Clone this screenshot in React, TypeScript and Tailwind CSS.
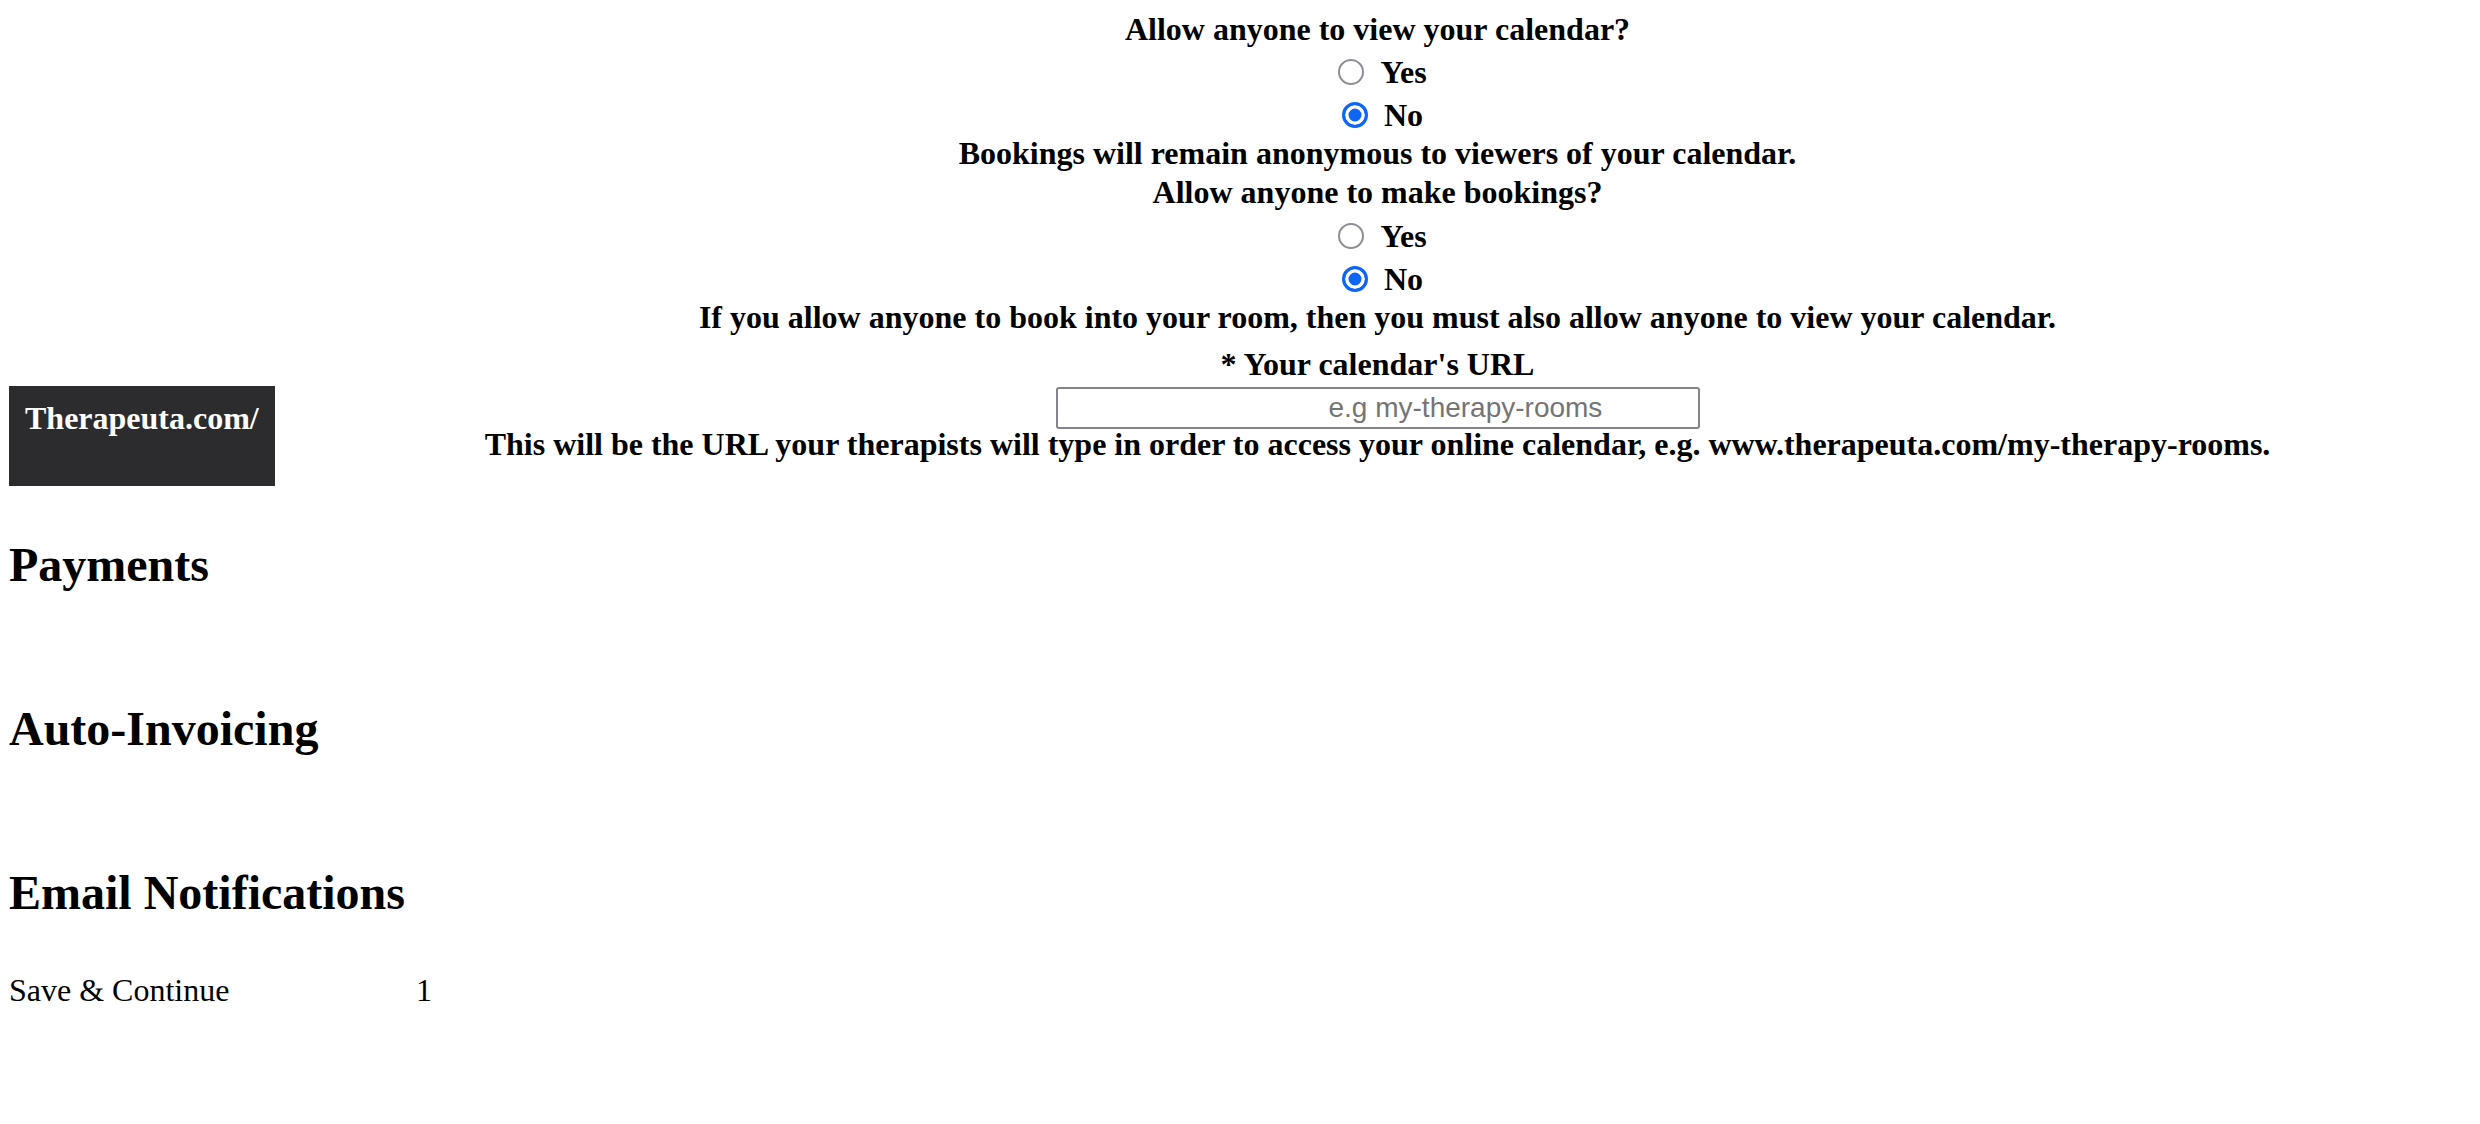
const RadioRow = ({ name, label, checked }: { name: string; label: string; checked?: boolean }) => {
  return (
    <label className="flex h-[43px] items-end justify-center">
      <input
        type="radio"
        name={name}
        defaultChecked={checked}
        className="m-0 mb-[6px] ml-[10px] mr-[16px] h-[26px] w-[26px] shrink-0 appearance-none rounded-full border-2 border-[#8f8e94] bg-white checked:border-[3px] checked:border-[#0d66f6] checked:bg-[#0d66f6] checked:shadow-[inset_0_0_0_3.5px_#fff]"
      />
      <span className="leading-[38px]">{label}</span>
    </label>
  );
};

const App = () => {
  return (
    <div className="min-h-[1124px] bg-white pl-[9px] font-['Liberation_Serif',serif] text-[32px] text-black">
      <div className="flex items-end">
        <div className="h-[100px] w-[266px] shrink-0 bg-[#2c2c2e] pl-4 pt-[13px] font-bold leading-[38px] text-white">
          Therapeuta.com/
        </div>
        <div className="flex flex-1 flex-col items-center pb-[27px] pt-[10px] text-center font-bold">
          <p className="leading-[38px]">Allow anyone to view your calendar?</p>
          <RadioRow name="view" label="Yes" />
          <RadioRow name="view" label="No" checked />
          <p className="leading-[38px]">Bookings will remain anonymous to viewers of your calendar.</p>
          <p className="leading-[40px]">Allow anyone to make bookings?</p>
          <RadioRow name="book" label="Yes" />
          <RadioRow name="book" label="No" checked />
          <p className="leading-[38px]">
            If you allow anyone to book into your room, then you must also allow anyone to view your calendar.
          </p>
          <p className="mt-[9px] leading-[38px]">* Your calendar's URL</p>
          <input
            type="text"
            placeholder="e.g my-therapy-rooms"
            className="mt-1 h-[42px] w-[644px] rounded-[3px] border-2 border-[#85848c] bg-white pl-[271px] text-left font-['Liberation_Sans',sans-serif] text-[28px] font-normal outline-none placeholder:text-[#757575]"
          />
          <p className="leading-[30px]">
            This will be the URL your therapists will type in order to access your online calendar, e.g.
            www.therapeuta.com/my-therapy-rooms.
          </p>
        </div>
      </div>

      <div className="mt-[51px] h-[164px]">
        <h2 className="text-[48px] font-bold leading-[56px]">Payments</h2>
      </div>
      <div className="h-[164px]">
        <h2 className="text-[48px] font-bold leading-[56px]">Auto-Invoicing</h2>
      </div>
      <div className="h-[106px]">
        <h2 className="text-[48px] font-bold leading-[56px]">Email Notifications</h2>
      </div>

      <div className="flex leading-[38px]">
        <span className="w-[407px]">Save &amp; Continue</span>
        <span>1</span>
      </div>
    </div>
  );
};

export default App;
